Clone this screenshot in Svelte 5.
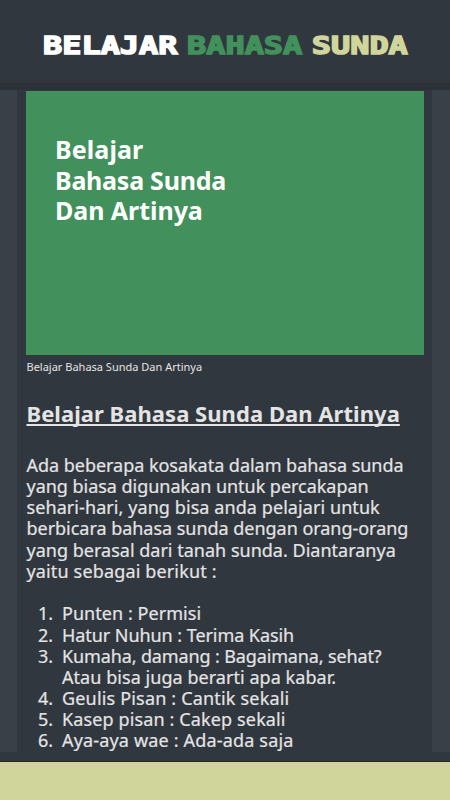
<script lang="ts">
    interface Line {
        text: string;
        tracking: number; // letter spacing, px
    }

    const brand = [
        { word: 'BELAJAR', tone: 'white' },
        { word: 'BAHASA', tone: 'green' },
        { word: 'SUNDA', tone: 'sand' }
    ];

    const cover: Line[] = [
        { text: 'Belajar', tracking: 0.1 },
        { text: 'Bahasa Sunda', tracking: -0.25 },
        { text: 'Dan Artinya', tracking: -0.05 }
    ];

    const intro: Line[] = [
        { text: 'Ada beberapa kosakata dalam bahasa sunda', tracking: -0.03 },
        { text: 'yang biasa digunakan untuk percakapan', tracking: -0.03 },
        { text: 'sehari-hari, yang bisa anda pelajari untuk', tracking: 0.08 },
        { text: 'berbicara bahasa sunda dengan orang-orang', tracking: -0.03 },
        { text: 'yang berasal dari tanah sunda. Diantaranya', tracking: 0.01 },
        { text: 'yaitu sebagai berikut :', tracking: 0.15 }
    ];

    const phrases: Line[][] = [
        [{ text: 'Punten : Permisi', tracking: 0.05 }],
        [{ text: 'Hatur Nuhun : Terima Kasih', tracking: -0.06 }],
        [
            { text: 'Kumaha, damang : Bagaimana, sehat?', tracking: -0.13 },
            { text: 'Atau bisa juga berarti apa kabar.', tracking: 0.05 }
        ],
        [{ text: 'Geulis Pisan : Cantik sekali', tracking: 0.18 }],
        [{ text: 'Kasep pisan : Cakep sekali', tracking: 0.13 }],
        [{ text: 'Aya-aya wae : Ada-ada saja', tracking: 0.17 }]
    ];
</script>

{#snippet row(line: Line)}
    <span class="line" style:letter-spacing="{line.tracking}px">{line.text}</span>
{/snippet}

<div class="screen">
    <header class="topbar">
        <h1 class="brand">
            {#each brand as { word, tone }}
                <span class={tone}>{word}</span>
            {/each}
        </h1>
    </header>

    <div class="content">
        <main class="article">
            <div class="cover">
                {#each cover as line}
                    {@render row(line)}
                {/each}
            </div>
            <p class="caption">Belajar Bahasa Sunda Dan Artinya</p>
            <h2 class="title">Belajar Bahasa Sunda Dan Artinya</h2>
            <p class="intro">
                {#each intro as line}
                    {@render row(line)}
                {/each}
            </p>
            <ol class="phrases">
                {#each phrases as lines, i}
                    <li>
                        <span class="number">{i + 1}.</span>
                        <span>
                            {#each lines as line}
                                {@render row(line)}
                            {/each}
                        </span>
                    </li>
                {/each}
            </ol>
        </main>
    </div>

    <footer class="bottombar"></footer>
</div>

<style>
    :global(body) {
        margin: 0;
        background: #31373f;
    }

    .screen {
        display: flex;
        flex-direction: column;
        width: 450px;
        height: 800px;
        overflow: hidden;
        background: #31373f;
        color: #e4e4e4;
        font-family: 'Noto Sans', sans-serif;
    }

    .topbar {
        box-sizing: border-box;
        flex: 0 0 90px;
        padding: 30px 0 0 43px;
        border-bottom: 7px solid #2c3138;
    }

    .brand {
        display: flex;
        gap: 7.6px;
        width: max-content;
        margin: 0;
        font: bold 25.6px/30px 'DejaVu Sans Mono', monospace;
        transform: scaleX(1.247);
        transform-origin: left;
        -webkit-text-stroke: 1.5px currentColor;
    }

    .white {
        color: #fff;
    }

    .green {
        color: #42905b;
    }

    .sand {
        color: #d0d59b;
    }

    .content {
        flex: 0 0 662px;
        box-sizing: border-box;
        padding: 0 18px 0 17px;
        background: #3a4048;
    }

    .article {
        box-sizing: border-box;
        height: 100%;
        padding: 1px 8px 0 9px;
        background: #31373f;
    }

    .line {
        display: block;
        white-space: nowrap;
    }

    .cover {
        box-sizing: border-box;
        height: 264px;
        padding: 43px 0 0 29px;
        background: #42905b;
        color: #fff;
        font-size: 25px;
        font-weight: 700;
        line-height: 30.5px;
    }

    .caption {
        margin: 4px 0 0 0.5px;
        font-size: 11px;
        line-height: 16px;
    }

    .title {
        width: max-content;
        margin: 23px 0 0 0.5px;
        font-size: 22px;
        line-height: 30px;
        letter-spacing: 0.04px;
        text-decoration: underline;
        text-decoration-thickness: 1.5px;
        text-underline-offset: 2px;
        text-decoration-skip-ink: none;
    }

    .intro {
        margin: 27px 0 0 0.5px;
        font-size: 18px;
        line-height: 21.15px;
        -webkit-text-stroke: 0.2px currentColor;
    }

    .phrases {
        margin: 21.5px 0 0;
        padding: 0;
        list-style: none;
        font-size: 18px;
        line-height: 21.15px;
        -webkit-text-stroke: 0.2px currentColor;
    }

    .phrases li {
        display: flex;
        gap: 9px;
    }

    .number {
        width: 27px;
        text-align: right;
    }

    .bottombar {
        box-sizing: border-box;
        flex: 0 0 48px;
        padding-top: 9px;
    }

    .bottombar::after {
        display: block;
        height: 39px;
        border-top: 1px solid #22282f;
        background: #d0d59b;
        content: '';
    }
</style>
